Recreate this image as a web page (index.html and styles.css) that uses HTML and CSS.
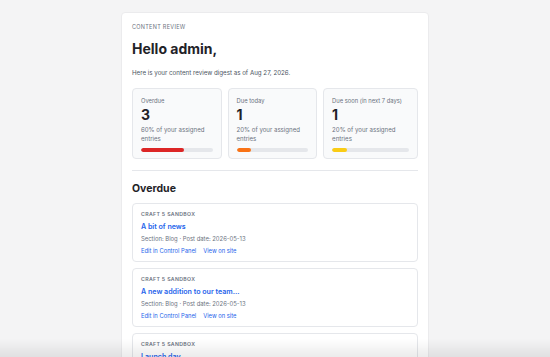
FILE: index.html
```html
<!DOCTYPE html>
<html lang="en">
<head>
    <meta charset="UTF-8">
    <meta name="viewport" content="width=device-width, initial-scale=1.0">
    <title>Content review digest</title>
    <link rel="stylesheet" href="styles.css">
</head>
<body>

<div class="page">
    <div class="digest">
        <div class="eyebrow">Content review</div>
        <h1>Hello admin,</h1>
        <p class="intro">Here is your content review digest as of Aug 27, 2026.</p>

        <div class="stats">
            <div class="stat">
                <div class="stat-label">Overdue</div>
                <div class="stat-num">3</div>
                <div class="stat-desc">60% of your assigned entries</div>
                <div class="bar"><div class="fill red" style="width: 60%"></div></div>
            </div>
            <div class="stat">
                <div class="stat-label">Due today</div>
                <div class="stat-num">1</div>
                <div class="stat-desc">20% of your assigned entries</div>
                <div class="bar"><div class="fill orange" style="width: 20%"></div></div>
            </div>
            <div class="stat">
                <div class="stat-label">Due soon (in next 7 days)</div>
                <div class="stat-num">1</div>
                <div class="stat-desc">20% of your assigned entries</div>
                <div class="bar"><div class="fill yellow" style="width: 20%"></div></div>
            </div>
        </div>

        <hr class="divider">

        <h2>Overdue</h2>

        <div class="entries">
            <div class="entry">
                <div class="site">Craft 5 Sandbox</div>
                <a class="entry-title" href="#">A bit of news</a>
                <div class="meta">Section: Blog · Post date: 2026-05-13</div>
                <div class="links">
                    <a href="#">Edit in Control Panel</a>
                    <a href="#">View on site</a>
                </div>
            </div>
            <div class="entry">
                <div class="site">Craft 5 Sandbox</div>
                <a class="entry-title" href="#">A new addition to our team...</a>
                <div class="meta">Section: Blog · Post date: 2026-05-13</div>
                <div class="links">
                    <a href="#">Edit in Control Panel</a>
                    <a href="#">View on site</a>
                </div>
            </div>
            <div class="entry">
                <div class="site">Craft 5 Sandbox</div>
                <a class="entry-title" href="#">Launch day</a>
                <div class="meta">Section: Blog · Post date: 2026-05-13</div>
                <div class="links">
                    <a href="#">Edit in Control Panel</a>
                    <a href="#">View on site</a>
                </div>
            </div>
        </div>
    </div>
</div>

<div class="fade"></div>

</body>
</html>
```

FILE: styles.css
```css
body {
    margin: 0;
    font-family: Inter, "Noto Sans", Arial, sans-serif;
    background-color: #f4f4f5;
    color: #1f2328;
}
.page {
    padding-top: 12px;
}
.digest {
    width: 286px;
    margin: 0 auto;
    padding: 10px 10px 20px 10px;
    background-color: #fff;
    border: 1px solid #ebebed;
    border-radius: 4px;
}
.eyebrow {
    font-size: 5.5px;
    line-height: 8px;
    text-transform: uppercase;
    letter-spacing: 0.3px;
    color: #6b7280;
}
h1 {
    margin: 8px 0 0 0;
    font-size: 14px;
    line-height: 20px;
    font-weight: 700;
    color: #1f2328;
}
.intro {
    margin: 9px 0 0 0;
    font-size: 6.2px;
    line-height: 9px;
    color: #4b5563;
}
.stats {
    display: grid;
    grid-template-columns: 1fr 1fr 1.06fr;
    gap: 6px;
    margin-top: 11px;
}
.stat {
    padding: 8px 8px 6px 8px;
    background-color: #f9fafb;
    border: 1px solid #e5e7eb;
    border-radius: 4px;
}
.stat-label {
    font-size: 5.8px;
    line-height: 7px;
    color: #6b7280;
}
.stat-num {
    margin-top: 3px;
    font-size: 14px;
    line-height: 16px;
    font-weight: 700;
    color: #1f2328;
}
.stat-desc {
    margin-top: 3px;
    font-size: 6.1px;
    line-height: 8.5px;
    color: #6b7280;
}
.bar {
    margin-top: 5px;
    height: 4px;
    border-radius: 2px;
    background-color: #e5e7eb;
    overflow: hidden;
}
.fill {
    height: 100%;
    border-radius: 2px;
}
.red { background-color: #dc2626; }
.orange { background-color: #f97316; }
.yellow { background-color: #facc15; }
.divider {
    margin: 11px 0 0 0;
    border: 0;
    border-top: 1px solid #e5e7eb;
}
h2 {
    margin: 10px 0 0 0;
    font-size: 10.5px;
    line-height: 16px;
    font-weight: 700;
    color: #1f2328;
}
.entries {
    display: flex;
    flex-direction: column;
    gap: 6px;
    margin-top: 6px;
}
.entry {
    padding: 7px 8px 6px 8px;
    border: 1px solid #e5e7eb;
    border-radius: 4px;
}
.site {
    font-size: 5.2px;
    line-height: 7px;
    font-weight: 600;
    letter-spacing: 0.35px;
    text-transform: uppercase;
    color: #6b7280;
}
.entry-title {
    display: block;
    margin-top: 2.5px;
    font-size: 7.1px;
    line-height: 11px;
    font-weight: 600;
    color: #2563eb;
    text-decoration: none;
}
.meta {
    margin-top: 3.5px;
    font-size: 5.9px;
    line-height: 8px;
    color: #6b7280;
}
.links {
    display: flex;
    gap: 7px;
    margin-top: 4px;
    font-size: 5.8px;
    line-height: 8px;
}
.links a {
    color: #2563eb;
    text-decoration: none;
}
.fade {
    position: fixed;
    left: 0;
    right: 0;
    bottom: 0;
    height: 18px;
    background: linear-gradient(rgba(0, 0, 0, 0), rgba(0, 0, 0, 0.08));
    pointer-events: none;
}
```
